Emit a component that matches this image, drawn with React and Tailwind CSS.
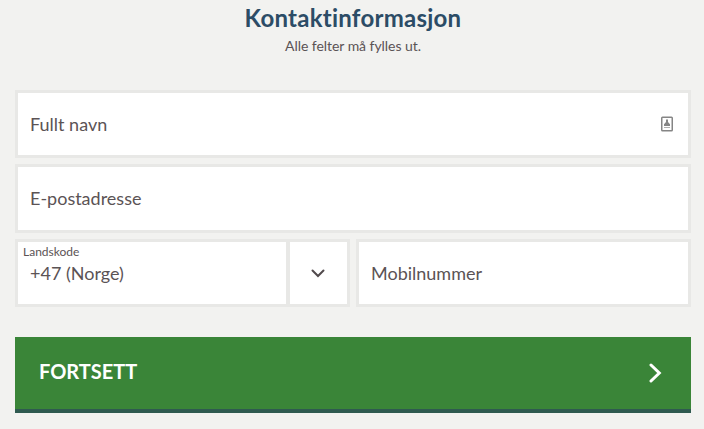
function Field({ label, children, className = "" }) {
  return (
    <div className={`flex items-center justify-between border-3 border-[#e8e8e6] bg-white pl-3 pr-[14px] text-[18px] text-[#5b5355] ${className}`}>
      <span>{label}</span>
      {children}
    </div>
  );
}

function ContactCardIcon() {
  return (
    <svg width="14" height="16" viewBox="0 0 14 16" fill="none" stroke="#858585">
      <rect x="1.75" y="1.25" width="10.5" height="13.5" rx="0.75" strokeWidth="1.5" />
      <path d="M6 3.5H8V6L10 8.2V10H4V8.2L6 6Z" fill="#858585" stroke="none" />
      <path d="M4 11.5H10" stroke="#b0b0b0" />
    </svg>
  );
}

export default function App() {
  return (
    <main className="h-[429px] w-[704px] overflow-hidden bg-[#f2f2f0] pr-[13px] pl-[15px] font-['Lato',sans-serif] [font-variant-ligatures:none]">
      <header className="flex h-[90px] flex-col items-center pt-[3px] text-center">
        <h1 className="text-[24px] leading-[30px] font-bold tracking-[0.25px] text-[#2c4c66]">Kontaktinformasjon</h1>
        <p className="mt-1 text-[14px] leading-[18px] tracking-[-0.05px] text-[#5b5355]">Alle felter må fylles ut.</p>
      </header>
      <form className="flex flex-col">
        <Field label="Fullt navn" className="h-[68px]">
          <ContactCardIcon />
        </Field>
        <Field label="E-postadresse" className="mt-[6px] h-[69px]" />
        <div className="mt-[6px] flex h-[68px] gap-[6px]">
          <div className="flex w-[335px] border-3 border-[#e8e8e6] bg-white text-[#5b5355]">
            <div className="w-[272px] border-r-4 border-[#e8e8e6] pl-[5px] pt-[2px]">
              <div className="text-[12px] leading-[15px]">Landskode</div>
              <div className="pl-[7px] pt-[2px] text-[18px] leading-[24px]">+47 (Norge)</div>
            </div>
            <div className="flex flex-1 items-center justify-center pr-px">
              <svg width="14" height="9" viewBox="0 0 14 9" fill="none" stroke="#514a4c" strokeWidth="2" strokeLinecap="round"><path d="M1.5 1.5L7 7L12.5 1.5" /></svg>
            </div>
          </div>
          <Field label="Mobilnummer" className="flex-1" />
        </div>
        <button type="button" className="mt-[30px] flex h-[76px] items-center justify-between border-b-4 border-[#2f5a50] bg-[#3a8538] pr-[29px] pl-6 text-[20px] font-bold text-white">
          <span className="pb-1">FORTSETT</span>
          <svg width="14" height="20" viewBox="0 0 14 20" fill="none" stroke="white" strokeWidth="3" strokeLinecap="round"><path d="M3 2L11.3 10L3 18" /></svg>
        </button>
      </form>
    </main>
  );
}
